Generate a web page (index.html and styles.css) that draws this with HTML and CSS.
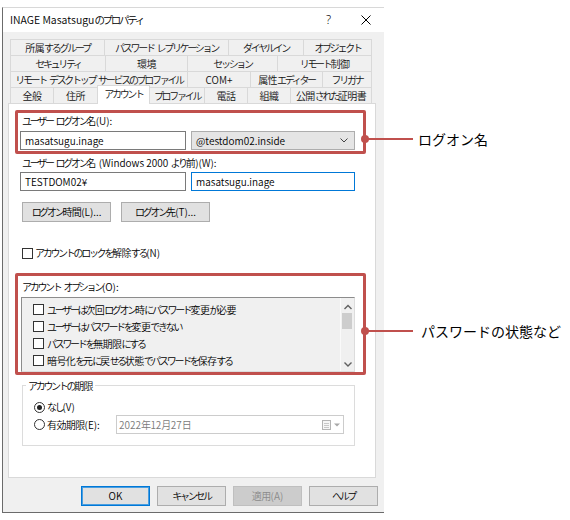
FILE: index.html
```html
<!DOCTYPE html>
<html lang="ja">
<head>
<meta charset="utf-8">
<title>INAGE Masatsuguのプロパティ</title>
<link rel="stylesheet" href="styles.css">
</head>
<body>
<div class="stage">
  <div class="window">
    <div class="titlebar">
      <span class="title"><span class="l">INAGE Masatsugu</span>のプロパティ</span>
      <span class="tb-btn help">?</span>
      <span class="tb-btn close"><svg width="10" height="10" viewBox="0 0 10 10"><path d="M0.5 0.5L9.5 9.5M9.5 0.5L0.5 9.5" stroke="#000" stroke-width="1" fill="none"/></svg></span>
    </div>
    <div class="client">
      <div class="tabs">
        <div class="tab-row r1">
          <div class="tab"><span class="kj">所属</span>するグループ</div>
          <div class="tab">パスワード レプリケーション</div>
          <div class="tab">ダイヤルイン</div>
          <div class="tab">オブジェクト</div>
        </div>
        <div class="tab-row r2">
          <div class="tab">セキュリティ</div>
          <div class="tab kj">環境</div>
          <div class="tab">セッション</div>
          <div class="tab">リモート<span class="kj">制御</span></div>
        </div>
        <div class="tab-row r3">
          <div class="tab">リモート デスクトップ サービスのプロファイル</div>
          <div class="tab l">COM+</div>
          <div class="tab"><span class="kj">属性</span>エディター</div>
          <div class="tab">フリガナ</div>
        </div>
        <div class="tab-row r4">
          <div class="tab kj">全般</div>
          <div class="tab kj">住所</div>
          <div class="tab active">アカウント</div>
          <div class="tab">プロファイル</div>
          <div class="tab kj">電話</div>
          <div class="tab kj">組織</div>
          <div class="tab"><span class="kj">公開</span>された<span class="kj">証明書</span></div>
        </div>
      </div>

      <div class="pane">
        <div class="section sec-logon">
          <div class="label">ユーザー ログオン<span class="kj">名</span><span class="l">(U):</span></div>
          <div class="field-row">
            <div class="input">masatsugu.inage</div>
            <div class="combo"><span>@testdom02.inside</span><svg width="8" height="5" viewBox="0 0 8 5"><polyline points="0.5,0.5 4,4 7.5,0.5" fill="none" stroke="#444" stroke-width="1"/></svg></div>
          </div>
          <div class="frame frame-logon"></div>
          <div class="callout callout-logon"><span class="dot"></span><span class="line"></span><span class="callout-text">ログオン名</span></div>
        </div>

        <div class="label label-pre2000">ユーザー ログオン<span class="kj">名</span> <span class="l">(Windows 2000 </span>より<span class="kj">前</span><span class="l">)(W):</span></div>
        <div class="field-row row-pre2000">
          <div class="input">TESTDOM02¥</div>
          <div class="input focused">masatsugu.inage</div>
        </div>

        <div class="btn-row">
          <div class="btn wide">ログオン<span class="kj">時間</span><span class="l">(L)...</span></div>
          <div class="btn wide">ログオン<span class="kj">先</span><span class="l">(T)...</span></div>
        </div>

        <div class="check-row">
          <span class="check"></span><span>アカウントのロックを<span class="kj">解除</span>する<span class="l">(N)</span></span>
        </div>

        <div class="section sec-options">
          <div class="label">アカウント オプション<span class="l">(O):</span></div>
          <div class="listbox">
            <div class="items">
              <div class="item"><span class="check"></span><span>ユーザーは<span class="kj">次回</span>ログオン<span class="kj">時</span>にパスワード<span class="kj">変更</span>が<span class="kj">必要</span></span></div>
              <div class="item"><span class="check"></span><span>ユーザーはパスワードを<span class="kj">変更</span>できない</span></div>
              <div class="item"><span class="check"></span><span>パスワードを<span class="kj">無期限</span>にする</span></div>
              <div class="item"><span class="check"></span><span><span class="kj">暗号化</span>を<span class="kj">元</span>に<span class="kj">戻</span>せる<span class="kj">状態</span>でパスワードを<span class="kj">保存</span>する</span></div>
            </div>
            <div class="scrollbar">
              <svg class="sb-arrow" width="14" height="15" viewBox="0 0 14 15"><polyline points="3.5,11 7,7.5 10.5,11" fill="none" stroke="#606060" stroke-width="1.4"/></svg>
              <div class="thumb"></div>
              <div class="sb-space"></div>
              <svg class="sb-arrow" width="14" height="15" viewBox="0 0 14 15"><polyline points="3.5,6.5 7,10 10.5,6.5" fill="none" stroke="#606060" stroke-width="1.4"/></svg>
            </div>
          </div>
          <div class="frame frame-options"></div>
          <div class="callout callout-options"><span class="dot"></span><span class="line"></span><span class="callout-text wide-gap">パスワードの状態など</span></div>
        </div>

        <div class="group">
          <div class="group-title">アカウントの<span class="kj">期限</span></div>
          <div class="radio-row">
            <span class="radio checked"></span><span>なし<span class="l">(V)</span></span>
          </div>
          <div class="radio-row row-date">
            <span class="radio"></span><span class="radio-label"><span class="kj">有効期限</span><span class="l">(E):</span></span>
            <div class="date">
              <span><span class="l">2022</span><span class="kj">年</span><span class="l">12</span><span class="kj">月</span><span class="l">27</span><span class="kj">日</span></span>
              <span class="date-icons">
                <svg width="9" height="10" viewBox="0 0 9 10"><rect x="0.5" y="0.5" width="8" height="9" fill="#f6f6f6" stroke="#b4b4b4"/><path d="M2 3.5H7M2 5.5H7M2 7.5H7" stroke="#c8c8c8" stroke-width="1"/></svg>
                <svg width="6" height="4" viewBox="0 0 6 4"><path d="M0 0.5H6L3 3.5Z" fill="#a8a8a8"/></svg>
              </span>
            </div>
          </div>
        </div>
      </div>

      <div class="footer">
        <div class="btn default l">OK</div>
        <div class="btn">キャンセル</div>
        <div class="btn disabled"><span class="kj">適用</span><span class="l">(A)</span></div>
        <div class="btn">ヘルプ</div>
      </div>
    </div>
  </div>
</div>
</body>
</html>
```

FILE: styles.css
```css
* { box-sizing: border-box; }
html, body { margin: 0; padding: 0; }
body {
  width: 570px;
  height: 520px;
  overflow: hidden;
  background: #ffffff;
  font-family: "Noto Sans CJK JP", "Noto Sans", sans-serif;
  font-size: 10px;
  line-height: 14px;
  color: #000;
}
.stage { padding: 7px 0 0 2px; }
.window {
  width: 382px;
  height: 506px;
  border-top: 1px solid #d8d8d8;
  border-left: 1px solid #6b6b6b;
  border-bottom: 1px solid #6b6b6b;
  background: #f0f0f0;
  display: flex;
  flex-direction: column;
  letter-spacing: -2.3px;
  word-spacing: 3px;
  font-weight: 350;
}
.kj { letter-spacing: -0.6px; }
.l { letter-spacing: 0; word-spacing: 0; }
.titlebar {
  height: 24px;
  background: #fff;
  display: flex;
  align-items: center;
  padding-left: 7px;
}
.title { flex: 1; line-height: 24px; white-space: nowrap; font-size: 10.5px; }
.tb-btn {
  width: 37px;
  height: 24px;
  display: flex;
  align-items: center;
  justify-content: center;
}
.help { font-family: "Noto Sans", sans-serif; font-size: 12px; letter-spacing: 0; }

.client {
  flex: 1;
  padding: 7px 6px 6px 5px;
  display: flex;
  flex-direction: column;
}
.tabs { margin-left: 2px; width: 362px; }
.tab-row { display: grid; height: 16px; }
.r1 { grid-template-columns: 94px 124px 75px 69px; }
.r2 { grid-template-columns: 95px 82px 90px 95px; }
.r3 { grid-template-columns: 177px 63px 72px 50px; }
.r4 { grid-template-columns: 43px 44px 52px 55px 43px 43px 82px; }
.tab {
  border-top: 1px solid #d9d9d9;
  border-left: 1px solid #d9d9d9;
  text-align: center;
  line-height: 15px;
  white-space: nowrap;
  color: #111;
}
.tab:last-child { border-right: 1px solid #d9d9d9; }
.tab.active {
  background: #fff;
  margin-top: -2px;
  margin-right: -1px;
  height: 19px;
  line-height: 16px;
  border-right: 1px solid #d9d9d9;
  position: relative;
  z-index: 1;
}

.pane {
  width: 368px;
  height: 375px;
  background: #fff;
  border: 1px solid #d9d9d9;
  padding: 10px 10px 0 11px;
  display: flex;
  flex-direction: column;
  align-items: flex-start;
}
.section { position: relative; display: flex; flex-direction: column; align-items: flex-start; }
.label { margin-left: 2px; height: 14px; white-space: nowrap; }
.field-row { display: flex; gap: 5px; margin-top: 3px; }
.input {
  width: 166px;
  height: 19px;
  border: 1px solid #7a7a7a;
  background: #fff;
  padding: 0 4px;
  line-height: 17px;
  white-space: nowrap;
  letter-spacing: 0;
}
.input.focused { width: 164px; border-color: #0078d7; }
.combo {
  width: 164px;
  height: 19px;
  border: 1px solid #adadad;
  background: #e5e5e5;
  padding: 0 6px 0 4px;
  line-height: 17px;
  display: flex;
  align-items: center;
  justify-content: space-between;
  letter-spacing: 0;
}
.label-pre2000 { margin-top: 6px; }
.row-pre2000 { margin-top: 2px; }

.btn-row { display: flex; gap: 10px; margin-top: 11px; margin-left: 2px; }
.btn {
  width: 69px;
  height: 20px;
  border: 1px solid #adadad;
  background: #e1e1e1;
  text-align: center;
  line-height: 18px;
  white-space: nowrap;
}
.btn.wide { width: 89px; }
.btn.default { border-color: #0078d7; box-shadow: inset 0 0 0 1px #4a9ee0; }
.btn.disabled { background: #cccccc; border-color: #bfbfbf; color: #8a8a8a; }

.check {
  width: 11px;
  height: 11px;
  border: 1px solid #333;
  background: #fff;
  flex: none;
}
.check-row {
  display: flex;
  align-items: center;
  gap: 2px;
  height: 14px;
  margin-top: 24px;
  margin-left: 2px;
  white-space: nowrap;
}

.sec-options { margin-top: 20px; }
.listbox {
  margin-top: 3px;
  margin-left: 1px;
  width: 334px;
  height: 75px;
  border: 1px solid;
  border-color: #8c8c8c #dcdcdc #dcdcdc #8c8c8c;
  background: #f0f0f0;
  display: flex;
}
.items { flex: 1; padding: 3px 0 0 11px; overflow: hidden; }
.item {
  height: 17px;
  display: flex;
  align-items: center;
  gap: 3px;
  white-space: nowrap;
}
.scrollbar {
  width: 14px;
  border-left: 1px solid #fafafa;
  display: flex;
  flex-direction: column;
}
.sb-arrow { display: block; flex: none; }
.thumb { height: 16px; margin: 0 2px 0 1px; background: #cdcdcd; }
.sb-space { flex: 1; }

.frame {
  position: absolute;
  border: 3px solid #c0504d;
  border-radius: 2px;
  pointer-events: none;
}
.frame-logon { left: -5px; top: -4px; width: 351px; height: 44px; }
.frame-options { left: -5px; top: -7px; width: 351px; height: 102px; }
.callout {
  position: absolute;
  left: 341px;
  height: 20px;
  display: flex;
  align-items: center;
  white-space: nowrap;
}
.callout-logon { top: 15px; }
.callout-options { top: 41px; }
.dot { width: 8px; height: 8px; border-radius: 50%; background: #c0504d; flex: none; }
.line { width: 45px; height: 2px; background: #c0504d; margin-left: -1px; flex: none; }
.callout-text {
  margin-left: 5px;
  font-size: 14px;
  line-height: 20px;
  letter-spacing: 0;
  word-spacing: 0;
  font-weight: 400;
  color: #000;
}
.callout-text.wide-gap { margin-left: 8px; }

.group {
  margin-top: 13px;
  margin-left: 2px;
  width: 333px;
  height: 61px;
  border: 1px solid #dcdcdc;
  padding-left: 11px;
}
.group-title {
  margin-top: -7px;
  margin-left: -8px;
  padding: 0 2px;
  background: #fff;
  width: max-content;
  line-height: 14px;
}
.radio-row {
  display: flex;
  align-items: center;
  gap: 2px;
  height: 14px;
  margin-top: 7px;
  white-space: nowrap;
}
.row-date { height: 19px; margin-top: 1px; }
.radio {
  width: 11px;
  height: 11px;
  border: 1px solid #333;
  border-radius: 50%;
  background: #fff;
  flex: none;
  display: flex;
  align-items: center;
  justify-content: center;
}
.radio.checked::after {
  content: "";
  width: 5px;
  height: 5px;
  border-radius: 50%;
  background: #222;
}
.radio-label { width: 65px; }
.date {
  margin-left: 2px;
  width: 228px;
  height: 19px;
  border: 1px solid #cccccc;
  background: #fff;
  color: #7a7a7a;
  padding: 0 3px 0 2px;
  line-height: 17px;
  display: flex;
  align-items: center;
  justify-content: space-between;
}
.date-icons { display: flex; align-items: center; gap: 3px; }
.date-icons svg { display: block; }

.footer {
  display: flex;
  justify-content: flex-end;
  gap: 7px;
  margin-top: 8px;
}
```
